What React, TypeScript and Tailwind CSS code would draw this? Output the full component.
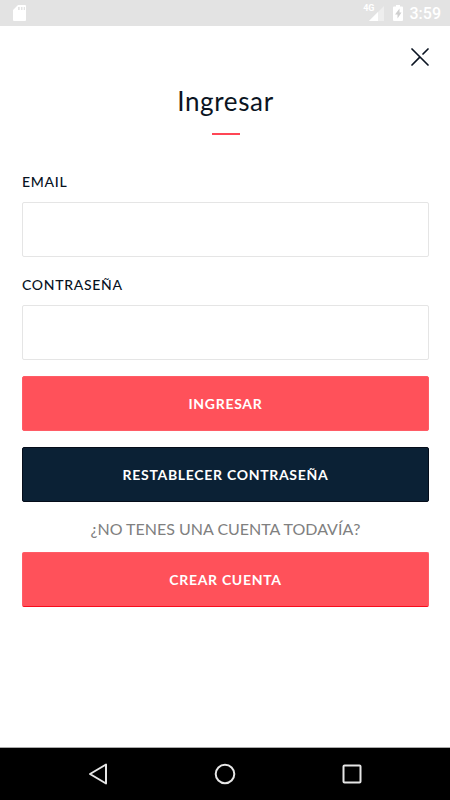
import type { ButtonHTMLAttributes } from "react"

function StatusBar() {
  return (
    <header className="flex h-[26px] items-center justify-between bg-[#e3e3e3] pl-[13px] pr-[9px] text-white">
      <svg className="h-4 w-[13px]" viewBox="0 0 13 16" fill="currentColor" aria-hidden="true">
        <path
          fillRule="evenodd"
          d="M5 0h7a1 1 0 0 1 1 1v14a1 1 0 0 1-1 1H1a1 1 0 0 1-1-1V5zM5 2v3h1.700V2zM8 2v3h1.500V2zM10.700 2v3H12V2z"
        />
      </svg>
      <div className="flex items-center">
        <span className="-mr-1.5 self-start font-[Roboto] text-[9px] font-bold leading-3">4G</span>
        <svg className="h-[15px] w-[15px]" viewBox="0 0 15 15" aria-hidden="true">
          <path d="M15 0v15H0z" fill="#eeeeee" />
          <path d="M9 6v9H0z" fill="currentColor" />
        </svg>
        <svg className="ml-[9px] h-4 w-2.5" viewBox="0 0 10 16" aria-hidden="true">
          <path d="M3 0h4v1.500h2a1 1 0 0 1 1 1V15a1 1 0 0 1-1 1H1a1 1 0 0 1-1-1V2.500a1 1 0 0 1 1-1h2z" fill="currentColor" />
          <path d="M6.500 3.500 2 9.500h2.500V13.500L8.500 7.500h-2z" fill="#cfcfcf" />
        </svg>
        <span className="ml-[7px] pt-0.5 font-[Roboto] text-base font-medium leading-5">3:59</span>
      </div>
    </header>
  )
}

function Field({ id, label, type }: { id: string; label: string; type: string }) {
  return (
    <div className="flex flex-col gap-2.5">
      <label htmlFor={id} className="text-sm leading-5 font-medium tracking-wider text-[#07121f]">
        {label}
      </label>
      <input
        id={id}
        type={type}
        className="h-[55px] w-full rounded-xs border border-[#e5e5e5] bg-white px-4 text-base outline-none"
      />
    </div>
  )
}

function Button({ className, ...props }: ButtonHTMLAttributes<HTMLButtonElement>) {
  return (
    <button
      className={`h-[55px] w-full rounded-xs border text-sm font-bold tracking-wider text-white ${className}`}
      {...props}
    />
  )
}

function NavBar() {
  return (
    <nav className="flex h-[53px] items-center justify-between border-t border-[#aaaaaa] bg-black px-[88px] text-[#e6e6e6]">
      <button type="button" aria-label="Atrás">
        <svg className="h-[22px] w-5" viewBox="0 0 20 22" fill="none" stroke="currentColor" strokeWidth="2" strokeLinejoin="round">
          <path d="M18 1.500v19L2 11z" />
        </svg>
      </button>
      <button type="button" aria-label="Inicio">
        <svg className="h-[22px] w-[22px]" viewBox="0 0 22 22" fill="none" stroke="currentColor" strokeWidth="2">
          <circle cx="11" cy="11" r="9.300" />
        </svg>
      </button>
      <button type="button" aria-label="Recientes">
        <svg className="h-5 w-5" viewBox="0 0 20 20" fill="none" stroke="currentColor" strokeWidth="2">
          <rect x="1.500" y="1.500" width="17" height="17" rx="1" />
        </svg>
      </button>
    </nav>
  )
}

export default function App() {
  return (
    <div className="flex min-h-screen flex-col bg-white font-[Lato,sans-serif]">
      <StatusBar />
      <main className="flex flex-1 flex-col pl-[22px] pr-[21px] pt-[22px]">
        <button type="button" aria-label="Cerrar" className="self-end">
          <svg className="h-[18px] w-[18px]" viewBox="0 0 18 18" fill="none" stroke="#0b1422" strokeWidth="1.700" strokeLinecap="round">
            <path d="M1 1l16 16M1 17l7.800-7.800M12 6l5-5" />
          </svg>
        </button>
        <h1 className="mt-[19px] text-center text-[26px] leading-8 tracking-wide text-[#0b1422]">Ingresar</h1>
        <div className="mt-4 h-0.5 w-7 self-center bg-[#ff4655]" />
        <form className="mt-[37px] flex flex-col" onSubmit={(e) => e.preventDefault()}>
          <div className="flex flex-col gap-[18px]">
            <Field id="email" label="EMAIL" type="email" />
            <Field id="password" label="CONTRASEÑA" type="password" />
          </div>
          <div className="mt-4 flex flex-col gap-4">
            <Button type="submit" className="border-[#ff5c66] bg-[#ff515a]">
              INGRESAR
            </Button>
            <Button type="button" className="border-[#050d1a] bg-[#0b2135]">
              RESTABLECER CONTRASEÑA
            </Button>
          </div>
          <p className="mt-[15px] text-center text-base leading-6 text-[#808080]">¿NO TENES UNA CUENTA TODAVÍA?</p>
          <Button type="button" className="mt-[11px] border-[#ff5c66] border-b-[#f80c1c] bg-[#ff515a]">
            CREAR CUENTA
          </Button>
        </form>
      </main>
      <NavBar />
    </div>
  )
}
